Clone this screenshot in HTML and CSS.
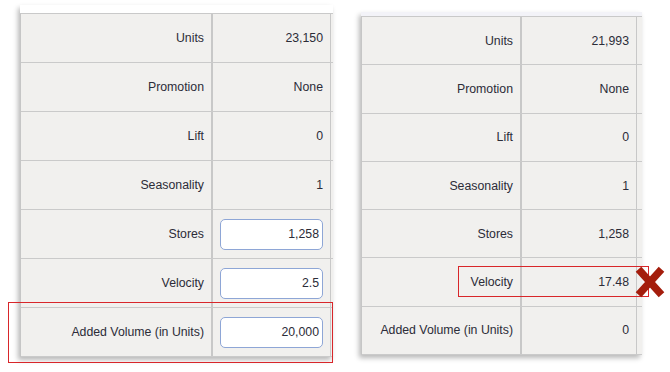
FILE: index.html
```html
<!DOCTYPE html>
<html>
<head>
<meta charset="utf-8">
<link rel="stylesheet" href="styles.css">
</head>
<body>
<div class="page">
  <div class="panel panel-left">
    <div class="strip strip-left"></div>
    <div class="table table-left">
      <div class="row"><div class="label">Units</div><div class="value">23,150</div><div class="edge"></div></div>
      <div class="row"><div class="label">Promotion</div><div class="value">None</div><div class="edge"></div></div>
      <div class="row"><div class="label">Lift</div><div class="value">0</div><div class="edge"></div></div>
      <div class="row"><div class="label">Seasonality</div><div class="value">1</div><div class="edge"></div></div>
      <div class="row"><div class="label">Stores</div><div class="value"><div class="input">1,258</div></div><div class="edge"></div></div>
      <div class="row"><div class="label">Velocity</div><div class="value"><div class="input">2.5</div></div><div class="edge"></div></div>
      <div class="row"><div class="label">Added Volume (in Units)</div><div class="value"><div class="input">20,000</div></div><div class="edge"></div></div>
    </div>
    <div class="highlight hl-left"></div>
  </div>
  <div class="panel panel-right">
    <div class="strip strip-right"></div>
    <div class="table table-right">
      <div class="row"><div class="label">Units</div><div class="value">21,993</div><div class="edge"></div></div>
      <div class="row"><div class="label">Promotion</div><div class="value">None</div><div class="edge"></div></div>
      <div class="row"><div class="label">Lift</div><div class="value">0</div><div class="edge"></div></div>
      <div class="row"><div class="label">Seasonality</div><div class="value">1</div><div class="edge"></div></div>
      <div class="row"><div class="label">Stores</div><div class="value">1,258</div><div class="edge"></div></div>
      <div class="row"><div class="label">Velocity</div><div class="value">17.48</div><div class="edge"></div></div>
      <div class="row"><div class="label">Added Volume (in Units)</div><div class="value">0</div><div class="edge"></div></div>
    </div>
    <div class="highlight hl-right"></div>
    <svg class="xmark" width="30" height="32" viewBox="0 0 30 32">
      <path d="M6 6 L24 26 M24 6 L6 26" stroke="#a41d0c" stroke-width="7.5" stroke-linecap="square" fill="none"/>
    </svg>
  </div>
</div>
</body>
</html>
```
FILE: styles.css
```css
html, body {
  margin: 0;
  padding: 0;
  background: #ffffff;
}
body {
  width: 670px;
  height: 372px;
  overflow: hidden;
  font-family: "Liberation Sans", Arial, sans-serif;
  font-size: 12.3px;
  color: #2c2c38;
}
.page {
  display: flex;
  align-items: flex-start;
}
.panel {
  position: relative;
  display: flex;
  flex-direction: column;
  box-shadow: -2px 3px 5px rgba(0, 0, 0, 0.28);
}
.panel-left {
  margin-left: 20px;
  margin-top: 5px;
  width: 313px;
}
.panel-right {
  margin-left: 28px;
  margin-top: 12px;
  width: 281px;
}
.strip {
  background: #ffffff;
}
.strip-left {
  height: 8px;
}
.strip-right {
  height: 4px;
  background: #f3f3f8;
}
.table {
  display: flex;
  flex-direction: column;
  border-top: 1px solid #c9c9c9;
  border-left: 1px solid #c6c6c6;
  background: #f1f0ee;
}
.row {
  display: flex;
  border-bottom: 1px solid #cacaca;
  box-sizing: border-box;
}
.table-left .row {
  height: 49px;
}
.table-right .row {
  height: 48.3px;
}
.label, .value {
  display: flex;
  align-items: center;
  justify-content: flex-end;
  padding-right: 7px;
  box-sizing: border-box;
}
.label {
  border-right: 2px solid #c8c8c8;
}
.value {
  border-right: 1px solid #c8c8c8;
}
.table-left .label { width: 192px; }
.table-left .value { width: 118px; }
.table-left .edge { width: 2px; }
.table-right .label { width: 160px; }
.table-right .value { width: 115px; }
.table-right .edge { width: 5px; }
.edge {
  background: #f1f0ee;
}
.input {
  width: 103px;
  height: 31px;
  box-sizing: border-box;
  background: #ffffff;
  border: 1.5px solid #8ea6d6;
  border-radius: 5px;
  display: flex;
  align-items: center;
  justify-content: flex-end;
  padding-right: 3px;
}
.highlight {
  position: absolute;
  border: 1.5px solid #d8262a;
  box-sizing: border-box;
}
.hl-left {
  left: -12px;
  top: 297px;
  width: 325px;
  height: 61px;
}
.hl-right {
  left: 97px;
  top: 254px;
  width: 191px;
  height: 31px;
}
.xmark {
  position: absolute;
  left: 274px;
  top: 254px;
}
```
